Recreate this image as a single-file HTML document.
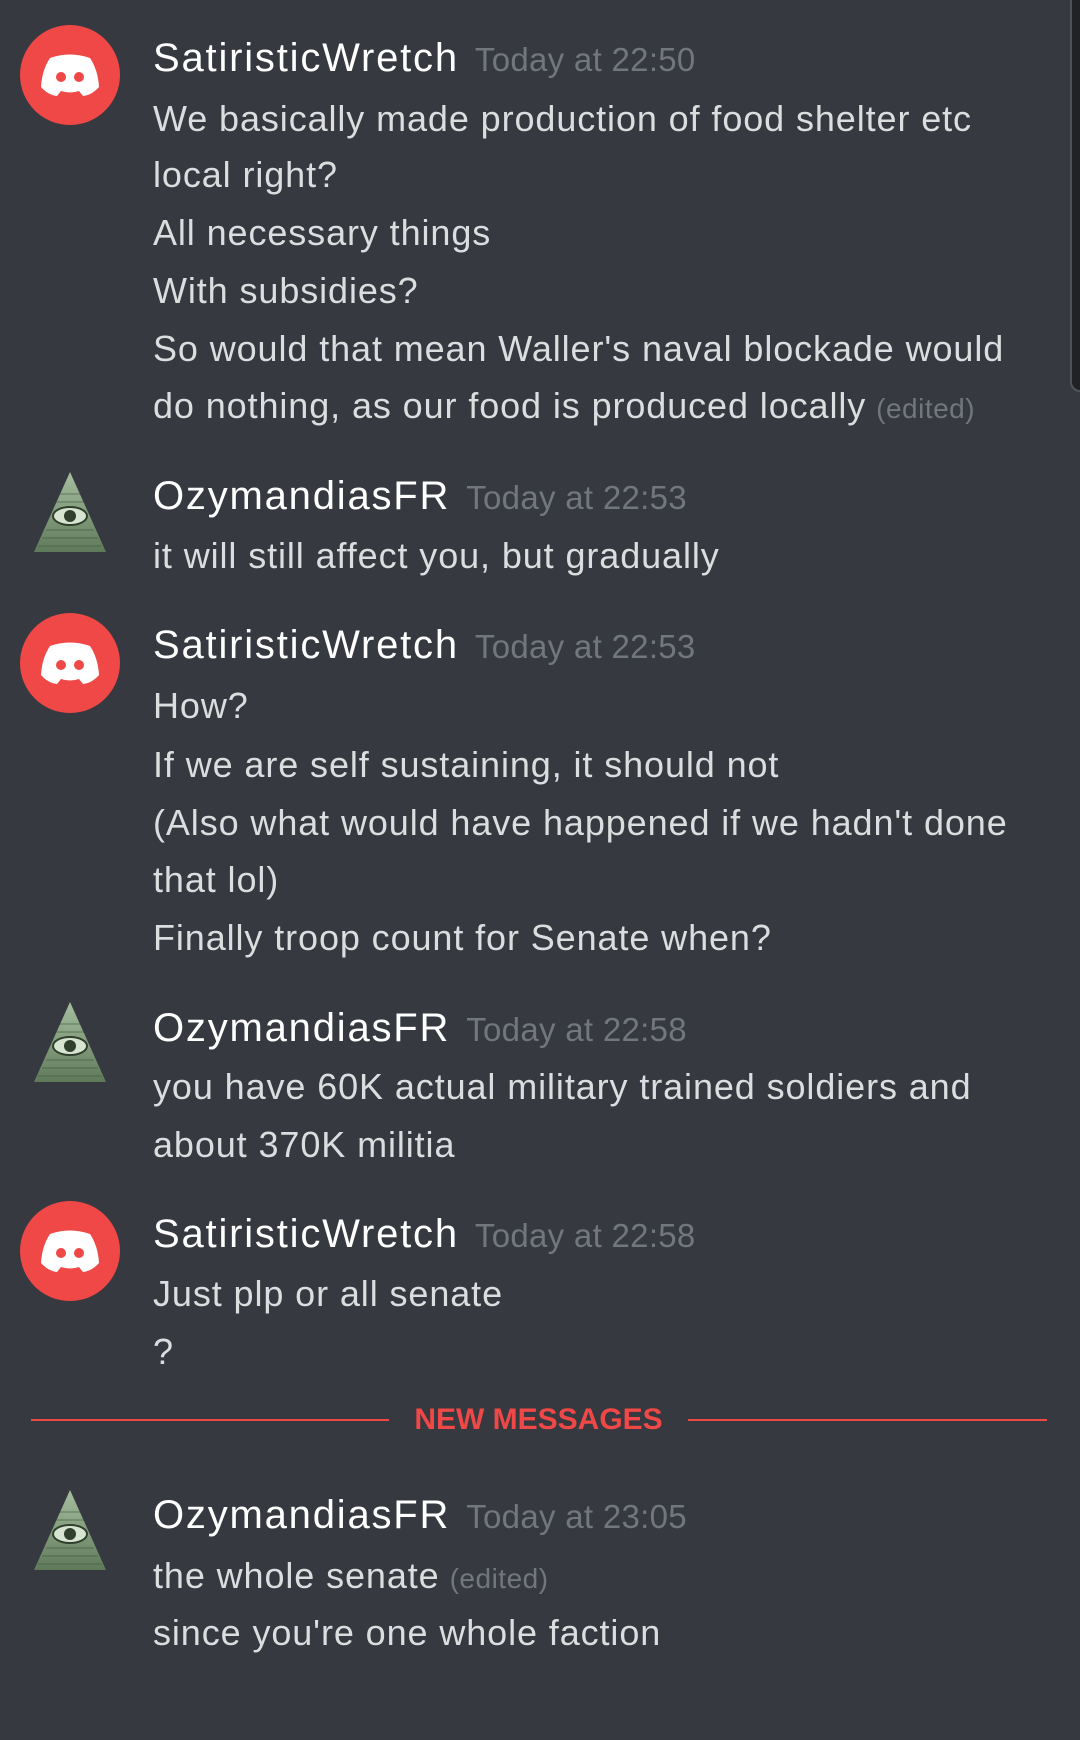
<!DOCTYPE html>
<html><head><meta charset="utf-8"><style>
html,body{margin:0;padding:0;background:#36393f;width:1080px;height:1740px;overflow:hidden;position:relative;font-family:"Liberation Sans",sans-serif}
.l{position:absolute;left:153px;height:58px;line-height:58px;font-size:36px;letter-spacing:0.9px;color:#dcddde;white-space:nowrap}
.n{color:#fff;font-size:40px;letter-spacing:1.8px}
.t{color:#72767d;font-size:33px;letter-spacing:0.3px;margin-left:16px}
.e{color:#72767d;font-size:28px;letter-spacing:0.5px;margin-left:10px}
.av{position:absolute;left:20px;width:100px;height:100px}
.py{position:absolute;left:30px;width:80px;height:88px}
</style></head><body>
<svg width="0" height="0" style="position:absolute"><defs>
<symbol id="dc" viewBox="0 0 100 100"><circle cx="50" cy="50" r="50" fill="#f04747"/>
<path d="M30 33 Q50 26 70 33 Q78 45 79 62 Q72 70 63 71 L59 66 Q50 69 41 66 L37 71 Q28 70 21 62 Q22 45 30 33Z" fill="#fff"/>
<circle cx="41" cy="52" r="5" fill="#f04747"/><circle cx="59" cy="52" r="5" fill="#f04747"/></symbol>
<linearGradient id="pg" x1="0" y1="0" x2="0" y2="1"><stop offset="0" stop-color="#a7bfa0"/><stop offset="1" stop-color="#5f7a5a"/></linearGradient>
<symbol id="py" viewBox="0 0 80 88"><polygon points="40,4 76,84 4,84" fill="url(#pg)"/>
<g stroke="#3e543b" stroke-width="1" opacity=".6"><line x1="30" y1="26" x2="50" y2="26"/><line x1="26" y1="34" x2="54" y2="34"/><line x1="16" y1="62" x2="64" y2="62"/><line x1="12" y1="70" x2="68" y2="70"/><line x1="8" y1="78" x2="72" y2="78"/></g>
<ellipse cx="40" cy="48" rx="17" ry="9" fill="#d8e4d2" stroke="#2f402c" stroke-width="2"/><circle cx="40" cy="48" r="6" fill="#2f402c"/></symbol>
</defs></svg>

<div style="position:absolute;left:1070px;top:-10px;width:20px;height:398px;background:#202225;border:2px solid #4f545c;border-radius:10px"></div>

<svg class="av" style="top:25px"><use href="#dc"/></svg>
<div class="l" style="top:29px"><span class="n">SatiristicWretch</span><span class="t">Today at 22:50</span></div>
<div class="l" style="top:90px">We basically made production of food shelter etc</div>
<div class="l" style="top:146px">local right?</div>
<div class="l" style="top:204px">All necessary things</div>
<div class="l" style="top:262px">With subsidies?</div>
<div class="l" style="top:320px">So would that mean Waller's naval blockade would</div>
<div class="l" style="top:377px">do nothing, as our food is produced locally<span class="e">(edited)</span></div>

<svg class="py" style="top:468px"><use href="#py"/></svg>
<div class="l" style="top:467px"><span class="n">OzymandiasFR</span><span class="t">Today at 22:53</span></div>
<div class="l" style="top:527px">it will still affect you, but gradually</div>

<svg class="av" style="top:613px"><use href="#dc"/></svg>
<div class="l" style="top:616px"><span class="n">SatiristicWretch</span><span class="t">Today at 22:53</span></div>
<div class="l" style="top:677px">How?</div>
<div class="l" style="top:736px">If we are self sustaining, it should not</div>
<div class="l" style="top:794px">(Also what would have happened if we hadn't done</div>
<div class="l" style="top:851px">that lol)</div>
<div class="l" style="top:909px">Finally troop count for Senate when?</div>

<svg class="py" style="top:998px"><use href="#py"/></svg>
<div class="l" style="top:999px"><span class="n">OzymandiasFR</span><span class="t">Today at 22:58</span></div>
<div class="l" style="top:1058px">you have 60K actual military trained soldiers and</div>
<div class="l" style="top:1116px">about 370K militia</div>

<svg class="av" style="top:1201px"><use href="#dc"/></svg>
<div class="l" style="top:1205px"><span class="n">SatiristicWretch</span><span class="t">Today at 22:58</span></div>
<div class="l" style="top:1265px">Just plp or all senate</div>
<div class="l" style="top:1323px">?</div>

<div style="position:absolute;left:31px;top:1419px;width:358px;height:2px;background:#f04747"></div>
<div style="position:absolute;left:688px;top:1419px;width:359px;height:2px;background:#f04747"></div>
<div style="position:absolute;left:389px;width:299px;text-align:center;top:1400px;line-height:40px;font-size:30px;font-weight:bold;color:#f04747">NEW MESSAGES</div>

<svg class="py" style="top:1486px"><use href="#py"/></svg>
<div class="l" style="top:1486px"><span class="n">OzymandiasFR</span><span class="t">Today at 23:05</span></div>
<div class="l" style="top:1547px">the whole senate<span class="e">(edited)</span></div>
<div class="l" style="top:1604px">since you're one whole faction</div>
</body></html>
